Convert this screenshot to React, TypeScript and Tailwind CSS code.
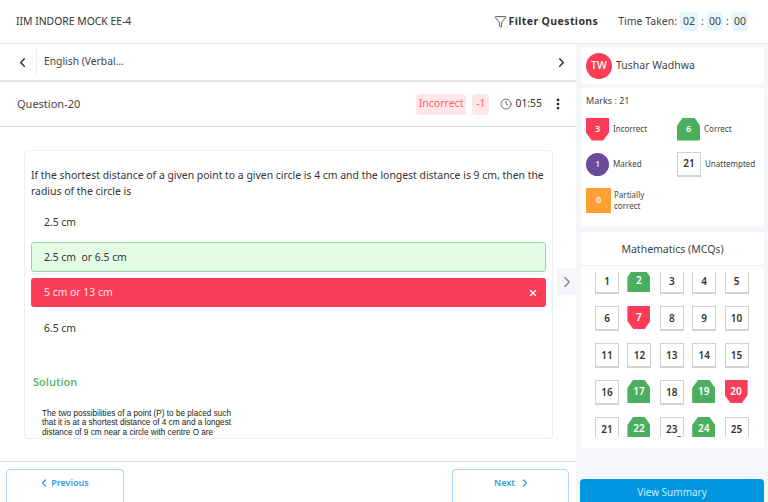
import { ChevronLeft, ChevronRight, Clock, Filter, EllipsisVertical, X } from "lucide-react";

const green = [2, 17, 19, 22, 24];
const red = [7, 20];
const nums = Array.from({ length: 25 }, (_, i) => i + 1);

function Tile({ n }: { n: number }) {
  if (green.includes(n))
    return (
      <div className="w-[23px] h-[23px] bg-[#4caf5f] text-white text-[10px] font-semibold flex items-center justify-center [clip-path:polygon(25%_0,75%_0,100%_35%,100%_100%,0_100%,0_35%)]">
        {n}
      </div>
    );
  if (red.includes(n))
    return (
      <div className="w-[23px] h-[23px] bg-[#fc3d57] text-white text-[10px] font-semibold flex items-center justify-center [clip-path:polygon(0_0,100%_0,100%_65%,75%_100%,25%_100%,0_65%)]">
        {n}
      </div>
    );
  return (
    <div className="relative w-[24px] h-[25px] bg-white border border-[#d2d2d2] border-b-2 text-[#333] text-[10px] font-semibold flex items-center justify-center">
      {n}
      {n === 23 && <span className="absolute -bottom-[2px] right-[1px] w-[6px] h-[6px] rounded-full bg-[#6b3fa0]" />}
    </div>
  );
}

export default function App() {
  return (
    <div className="w-[768px] h-[502px] overflow-hidden bg-white flex flex-col text-[#333] font-['Noto_Sans',sans-serif]">
      <header className="h-[44px] shrink-0 border-b border-[#e8e8e8] flex items-center pl-4 pr-5">
        <span className="text-[10.4px] text-[#333]">IIM INDORE MOCK EE-4</span>
        <div className="ml-auto flex items-center gap-[2px] font-bold text-[10.5px] tracking-[0.4px]">
          <Filter size={13} strokeWidth={1.5} />
          <span>Filter Questions</span>
        </div>
        <div className="ml-5 flex items-center text-[#444] text-[10.5px]">
          <span className="mr-[3px]">Time Taken:</span>
          <span className="bg-[#e6f4fb] rounded-sm w-[18px] h-[19px] flex items-center justify-center">02</span>
          <span className="w-[9px] text-center">:</span>
          <span className="bg-[#e6f4fb] rounded-sm w-[16px] h-[19px] flex items-center justify-center">00</span>
          <span className="w-[9px] text-center">:</span>
          <span className="bg-[#e6f4fb] rounded-sm w-[16px] h-[19px] flex items-center justify-center">00</span>
        </div>
      </header>

      <div className="flex-1 flex min-h-0">
        <main className="w-[576px] shrink-0 flex flex-col bg-white">
          <div className="h-[38px] shrink-0 border-b-2 border-[#e4e4e4] flex items-center pl-[15px] pr-[7px]">
            <ChevronLeft size={15} strokeWidth={2} className="text-[#222]" />
            <span className="w-px h-[26px] bg-[#e3f1fa] ml-[6px]" />
            <span className="ml-[7px] text-[10.3px] text-[#444]">English (Verbal...</span>
            <ChevronRight size={15} strokeWidth={2} className="ml-auto text-[#222]" />
          </div>

          <div className="h-[45px] shrink-0 border-b border-[#dcdcdc] flex items-center pl-[17px] pr-[11px]">
            <span className="text-[11px] text-[#444]">Question-20</span>
            <span className="ml-auto bg-[#ffe6e9] text-[#fc6075] text-[10.5px] h-[21px] px-[3px] flex items-center rounded-sm">Incorrect</span>
            <span className="ml-[6px] bg-[#ffe6e9] text-[#fc6075] text-[10.5px] h-[21px] w-[17px] flex items-center justify-center rounded-sm">-1</span>
            <Clock size={12} strokeWidth={1.5} className="ml-[11px] text-[#444]" />
            <span className="ml-[3px] text-[10.4px] text-[#333]">01:55</span>
            <EllipsisVertical size={14} strokeWidth={2.5} className="ml-[9px] text-[#222]" />
          </div>

          <div className="relative h-[335px] shrink-0 border-b border-[#dcdcdc] pt-[23px] pl-[24px] pr-[23px]">
            <div className="w-[529px] h-[289px] overflow-hidden border border-[#eeeeee] rounded-[4px] pl-[6px] pr-[6px] pt-[16px]">
              <p className="-mr-[4px] text-[10.42px] leading-[16px] text-[#333]">
                If the shortest distance of a given point to a given circle is 4 cm and the longest distance is 9 cm, then the radius of the circle is
              </p>
              <div className="h-[29px] mt-[9px] pl-[13px] flex items-center text-[10.4px]">2.5 cm</div>
              <div className="h-[30px] mt-[5px] pl-[12px] pt-[1px] flex items-center text-[10.4px] bg-[#e2fde3] border border-[#9ad6a0] rounded-[3px] whitespace-pre">2.5 cm  or 6.5 cm</div>
              <div className="h-[29px] mt-[6px] pl-[13px] pr-[8px] pt-[1px] flex items-center justify-between text-[10.4px] bg-[#fc3d57] text-[#ffe3e6] rounded-[3px]">
                <span>5 cm or 13 cm</span>
                <X size={10} strokeWidth={3} className="text-white" />
              </div>
              <div className="h-[29px] mt-[7px] pl-[13px] flex items-center text-[10.4px]">6.5 cm</div>
              <div className="mt-[31px] ml-[2px] text-[11px] font-semibold text-[#5cb86c]">Solution</div>
              <p className="mt-[18px] ml-[11px] w-[189px] text-[8.2px] leading-[9.8px] text-[#222] font-['Liberation_Sans',sans-serif] text-justify">
                The two possibilities of a point (P) to be placed such that it is at a shortest distance of 4 cm and a longest distance of 9 cm near a circle with centre O are
              </p>
            </div>
            <div className="absolute left-[557px] top-[141px] w-[19px] h-[27px] bg-[#f5f6f9] flex items-center justify-center">
              <ChevronRight size={18} strokeWidth={1.5} className="text-[#777]" />
            </div>
          </div>

          <div className="flex-1 flex justify-between pl-[6px] pr-[7px] pt-[7px]">
            <button className="w-[118px] h-[40px] border-[1.5px] border-[#a5dcf5] rounded-[4px] flex items-start pt-[6px] pr-[3px] justify-center gap-[1px] text-[#2ba3e0] text-[9px] font-semibold">
              <ChevronLeft size={12} strokeWidth={2.5} className="mt-[1px]" />Previous
            </button>
            <button className="w-[117px] h-[40px] border-[1.5px] border-[#a5dcf5] rounded-[4px] flex items-start pt-[6px] pl-[4px] justify-center gap-[4px] text-[#2ba3e0] text-[9px] font-semibold">
              Next<ChevronRight size={12} strokeWidth={2.5} className="mt-[1px]" />
            </button>
          </div>
        </main>

        <aside className="flex-1 bg-[#f5f6f9] pl-[5px] pr-[4px] pt-[3px] flex flex-col">
          <div className="h-[37px] bg-white rounded-[2px] shrink-0 flex items-center pl-[5px]">
            <div className="w-[26px] h-[26px] rounded-full bg-[#fc3d57] text-white text-[10.5px] font-medium flex items-center justify-center">TW</div>
            <span className="ml-[4px] text-[10.5px] text-[#444]">Tushar Wadhwa</span>
          </div>

          <div className="mt-[4px] h-[139px] bg-white rounded-[2px] shrink-0 px-[5px] pt-[6px]">
            <div className="text-[9px] text-[#444]">Marks : 21</div>
            <div className="mt-[10px] grid grid-cols-[91px_1fr] gap-y-[11px] text-[8px] text-[#444]">
              <div className="flex items-center gap-[4px]">
                <div className="w-[23px] h-[23px] bg-[#fc3d57] text-white text-[9px] font-semibold flex items-center justify-center [clip-path:polygon(0_0,100%_0,100%_65%,75%_100%,25%_100%,0_65%)]">3</div>
                Incorrect
              </div>
              <div className="flex items-center gap-[4px]">
                <div className="w-[23px] h-[23px] bg-[#4caf5f] text-white text-[9px] font-semibold flex items-center justify-center [clip-path:polygon(25%_0,75%_0,100%_35%,100%_100%,0_100%,0_35%)]">6</div>
                Correct
              </div>
              <div className="flex items-center gap-[4px]">
                <div className="w-[23px] h-[23px] rounded-full bg-[#6b4a9c] text-white/80 text-[9px] font-semibold flex items-center justify-center">1</div>
                Marked
              </div>
              <div className="flex items-center gap-[4px]">
                <div className="w-[24px] h-[25px] border border-[#d2d2d2] border-b-2 text-[#333] text-[10px] font-semibold flex items-center justify-center">21</div>
                Unattempted
              </div>
              <div className="flex items-center gap-[3px] col-span-2">
                <div className="w-[25px] h-[25px] bg-[#ff9f33] text-white text-[9px] font-semibold flex items-center justify-center">0</div>
                <span className="leading-[11.5px]">Partially<br />correct</span>
              </div>
            </div>
          </div>

          <div className="mt-[5px] h-[216px] bg-white rounded-[2px] shrink-0">
            <div className="h-[34px] pt-[2px] border-b border-[#eeeeee] flex items-center justify-center text-[10.5px] text-[#444]">Mathematics (MCQs)</div>
            <div className="h-[165px] mt-[6px] overflow-hidden">
              <div className="grid grid-cols-5 pl-[14px] w-[176px] -mt-[3px] gap-y-[12px] justify-items-start">
                {nums.map((n) => (
                  <Tile key={n} n={n} />
                ))}
              </div>
            </div>
          </div>

          <button className="mt-[31px] -ml-px w-[184px] flex-1 pt-[3px] bg-[#0096e0] rounded-t-[4px] text-[#c9ecff] text-[10px]">View Summary</button>
        </aside>
      </div>
    </div>
  );
}
